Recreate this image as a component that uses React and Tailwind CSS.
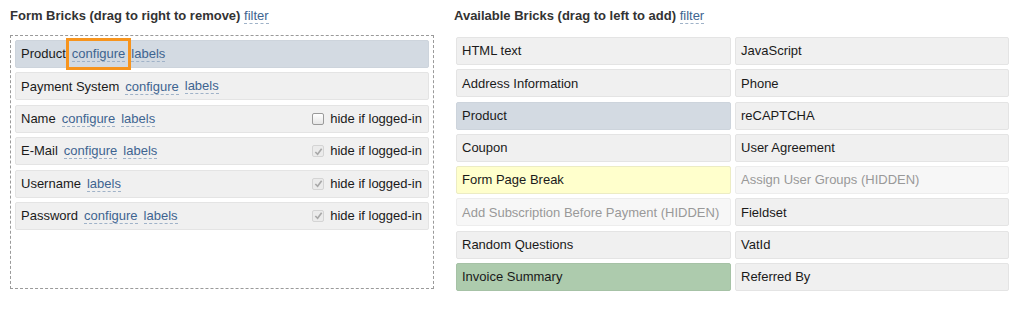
const formBricks = [
  { name: "Product", configure: true, selected: true },
  { name: "Payment System", configure: true },
  { name: "Name", configure: true, hide: "off" },
  { name: "E-Mail", configure: true, hide: "on" },
  { name: "Username", configure: false, hide: "on" },
  { name: "Password", configure: true, hide: "on" },
];

const available = [
  { name: "HTML text" },
  { name: "JavaScript" },
  { name: "Address Information" },
  { name: "Phone" },
  { name: "Product", tone: "selected" },
  { name: "reCAPTCHA" },
  { name: "Coupon" },
  { name: "User Agreement" },
  { name: "Form Page Break", tone: "yellow" },
  { name: "Assign User Groups (HIDDEN)", tone: "hidden" },
  { name: "Add Subscription Before Payment (HIDDEN)", tone: "hidden" },
  { name: "Fieldset" },
  { name: "Random Questions" },
  { name: "VatId" },
  { name: "Invoice Summary", tone: "green" },
  { name: "Referred By" },
];

const tones = {
  default: "bg-[#f0f0f0] border-[#e4e4e4] text-[#1a1a1a]",
  selected: "bg-[#d3dae2] border-[#cdd4dc] text-[#1a1a1a]",
  yellow: "bg-[#ffffcc] border-[#ececc4] text-[#1a1a1a]",
  green: "bg-[#adcbad] border-[#a6c2a6] text-[#1a1a1a]",
  hidden: "bg-[#f7f7f7] border-[#ededed] text-[#999]",
};

function DashLink({ children }) {
  return (
    <a
      href="#"
      className="text-[#3e6490] border-b border-dashed border-[#9fb2c8] leading-[15px]"
    >
      {children}
    </a>
  );
}

function FakeCheckbox({ checked }) {
  if (checked) {
    return (
      <span className="w-[12px] h-[12px] rounded-[2px] border border-[#d4d4d4] bg-[#ebebeb] flex items-center justify-center">
        <svg width="9" height="9" viewBox="0 0 10 10">
          <path d="M1.5 5.5 L4 8 L8.5 2" fill="none" stroke="#a8a8a8" strokeWidth="1.8" />
        </svg>
      </span>
    );
  }
  return (
    <span className="w-[12px] h-[12px] rounded-[2px] border border-[#9a9a9a] bg-gradient-to-b from-white to-[#e6e6e6]" />
  );
}

export default function App() {
  return (
    <div className="flex gap-[20px] px-[10px] pt-[7px] font-['Liberation_Sans',Arial,sans-serif] text-[13px] text-[#1a1a1a] bg-white min-h-[317px]">
      <div className="w-[424px]">
        <h2 className="font-bold text-[#333] leading-[18px] mb-[10px]">
          Form Bricks (drag to right to remove) <span className="font-normal"><DashLink>filter</DashLink></span>
        </h2>
        <div className="border border-dashed border-[#9a9a9a] h-[254px] p-[4px] flex flex-col gap-[4.4px]">
          {formBricks.map((b) => (
            <div
              key={b.name}
              className={`relative h-[28px] border rounded-[2px] pl-[5px] pr-[6px] flex items-center ${
                b.selected ? tones.selected : tones.default
              }`}
            >
              <span className="mr-[6px]">{b.name}</span>
              {b.configure && (
                <span className="mr-[6px]">
                  <DashLink>configure</DashLink>
                </span>
              )}
              <DashLink>labels</DashLink>
              {b.hide && (
                <label className="ml-auto flex items-center gap-[6px]">
                  <FakeCheckbox checked={b.hide === "on"} />
                  <span>hide if logged-in</span>
                </label>
              )}
              {b.selected && (
                <div className="absolute left-[50px] top-[-3px] w-[65px] h-[32px] border-[3px] border-[#f7941d]" />
              )}
            </div>
          ))}
        </div>
      </div>

      <div className="flex-1">
        <h2 className="font-bold text-[#333] leading-[18px] mb-[12px]">
          Available Bricks (drag to left to add) <span className="font-normal"><DashLink>filter</DashLink></span>
        </h2>
        <div className="grid grid-cols-[275px_274px] gap-x-[4px] gap-y-[4.3px] pl-[2px]">
          {available.map((b, i) => (
            <div
              key={i}
              className={`h-[28px] border rounded-[2px] pl-[5px] flex items-center ${tones[b.tone || "default"]}`}
            >
              {b.name}
            </div>
          ))}
        </div>
      </div>
    </div>
  );
}
